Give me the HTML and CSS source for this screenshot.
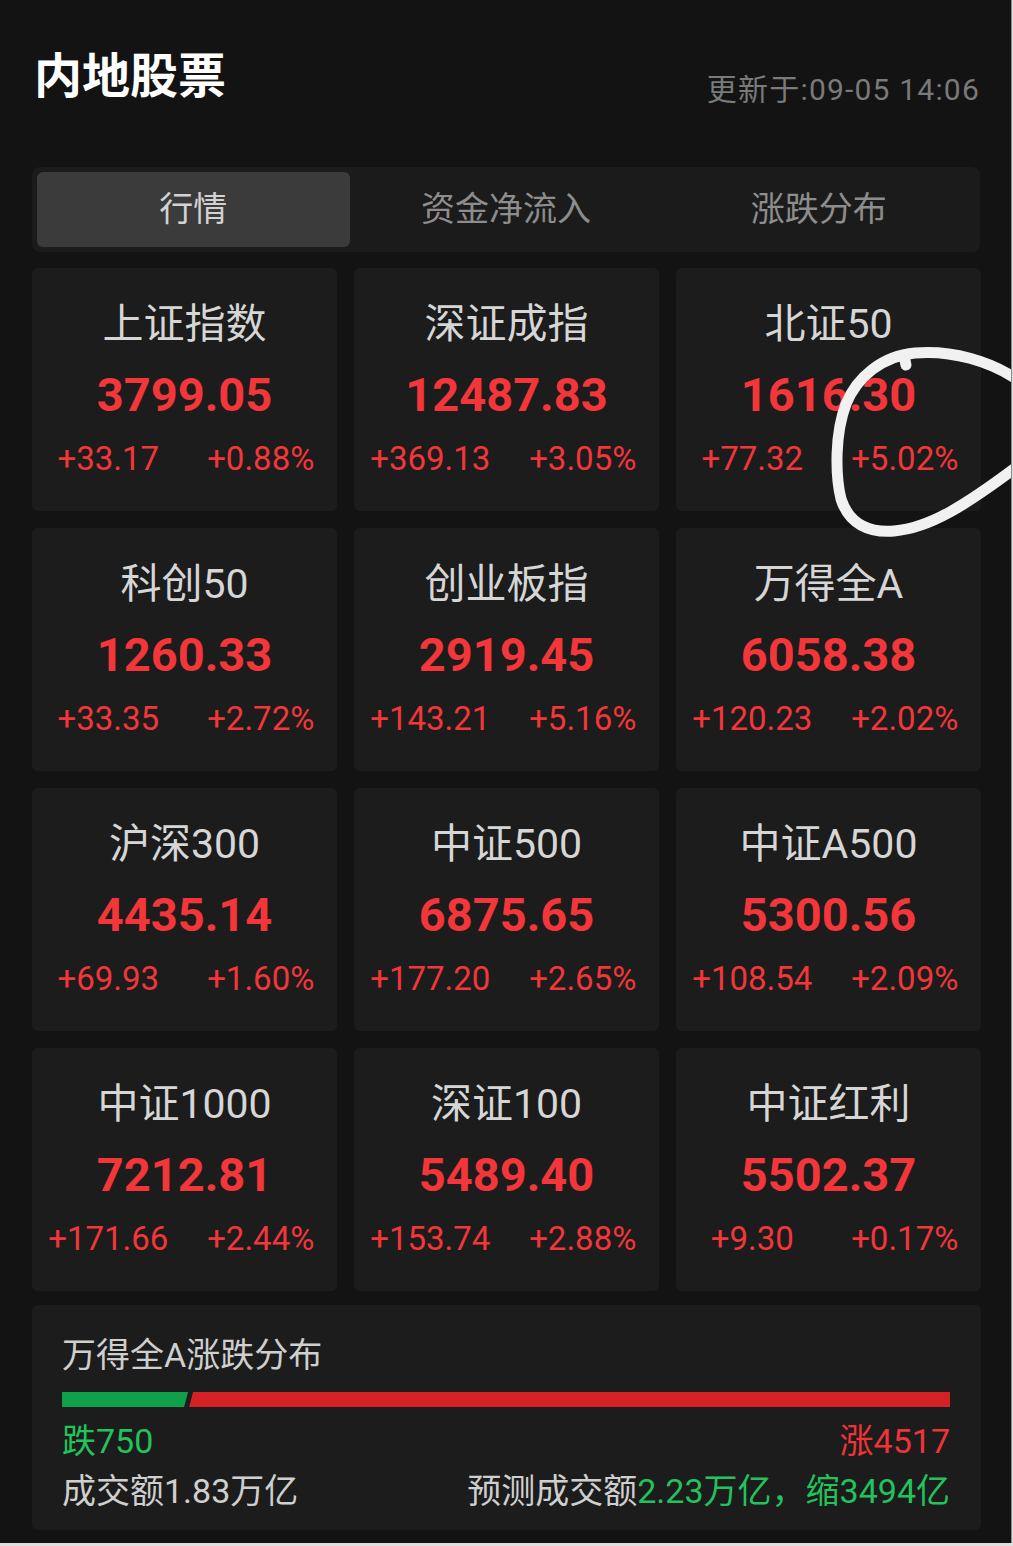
FILE: index.html
```html
<!DOCTYPE html>
<html lang="zh-CN">
<head>
<meta charset="utf-8">
<title>内地股票</title>
<link rel="stylesheet" href="styles.css">
</head>
<body>
<div class="screen">
  <header class="header">
    <h1 class="title">内地股票</h1>
    <div class="updated">更新于:09-05 14:06</div>
  </header>

  <nav class="tabs">
    <div class="tab active">行情</div>
    <div class="tab">资金净流入</div>
    <div class="tab">涨跌分布</div>
  </nav>

  <section class="grid">
    <div class="card"><div class="name">上证指数</div><div class="value">3799.05</div><div class="change"><span>+33.17</span><span>+0.88%</span></div></div>
    <div class="card"><div class="name">深证成指</div><div class="value">12487.83</div><div class="change"><span>+369.13</span><span>+3.05%</span></div></div>
    <div class="card"><div class="name">北证50</div><div class="value">1616.30</div><div class="change"><span>+77.32</span><span>+5.02%</span></div></div>

    <div class="card"><div class="name">科创50</div><div class="value">1260.33</div><div class="change"><span>+33.35</span><span>+2.72%</span></div></div>
    <div class="card"><div class="name">创业板指</div><div class="value">2919.45</div><div class="change"><span>+143.21</span><span>+5.16%</span></div></div>
    <div class="card"><div class="name">万得全A</div><div class="value">6058.38</div><div class="change"><span>+120.23</span><span>+2.02%</span></div></div>

    <div class="card"><div class="name">沪深300</div><div class="value">4435.14</div><div class="change"><span>+69.93</span><span>+1.60%</span></div></div>
    <div class="card"><div class="name">中证500</div><div class="value">6875.65</div><div class="change"><span>+177.20</span><span>+2.65%</span></div></div>
    <div class="card"><div class="name">中证A500</div><div class="value">5300.56</div><div class="change"><span>+108.54</span><span>+2.09%</span></div></div>

    <div class="card"><div class="name">中证1000</div><div class="value">7212.81</div><div class="change"><span>+171.66</span><span>+2.44%</span></div></div>
    <div class="card"><div class="name">深证100</div><div class="value">5489.40</div><div class="change"><span>+153.74</span><span>+2.88%</span></div></div>
    <div class="card"><div class="name">中证红利</div><div class="value">5502.37</div><div class="change"><span>+9.30</span><span>+0.17%</span></div></div>
  </section>

  <section class="dist">
    <div class="dist-title">万得全A涨跌分布</div>
    <div class="bar">
      <div class="bar-down" style="width: 14.2%"></div>
      <div class="bar-up"></div>
    </div>
    <div class="dist-row">
      <span class="green">跌750</span>
      <span class="red">涨4517</span>
    </div>
    <div class="dist-row">
      <span>成交额1.83万亿</span>
      <span>预测成交额<span class="green">2.23万亿，缩3494亿</span></span>
    </div>
  </section>

  <svg class="scribble" width="1013" height="1546" viewBox="0 0 1013 1546" aria-hidden="true">
    <path d="M1018 380 C 990 361, 952 350, 915 353 C 882 356, 857 377, 846 404 C 835 433, 835 474, 841 499 C 849 524, 869 533, 894 531 C 930 528, 966 505, 1018 466" />
    <path d="M904 356 L 906 365" />
  </svg>
</div>
</body>
</html>
```

FILE: styles.css
```css
html {
  background: #dedede;
}

body {
  margin: 0;
  font-family: Roboto, "Noto Sans CJK SC", "Noto Sans", sans-serif;
}

.screen {
  position: relative;
  width: 1012px;
  height: 1543px;
  box-sizing: border-box;
  border-right: 1px solid #8c8c8c;
  background: #131313;
  padding: 47px 31px 0 32px;
  overflow: hidden;
}

.header {
  display: flex;
  justify-content: space-between;
  align-items: flex-start;
  height: 60px;
}

.title {
  margin: 0;
  font-size: 48px;
  line-height: 60px;
  font-weight: 700;
  color: #ffffff;
  padding-left: 2px;
}

.updated {
  margin-top: 23px;
  font-size: 30px;
  line-height: 40px;
  color: #7a7a7a;
  letter-spacing: 1.2px;
}

.tabs {
  margin-top: 60px;
  width: 948px;
  height: 85px;
  box-sizing: border-box;
  padding: 5px;
  display: flex;
  background: #1b1b1b;
  border-radius: 8px;
}

.tab {
  flex: 1;
  display: flex;
  align-items: center;
  justify-content: center;
  padding-bottom: 6px;
  font-size: 34px;
  color: #8d8d8d;
  border-radius: 6px;
}

.tab.active {
  background: #3b3b3b;
  color: #d2d2d2;
}

.grid {
  margin-top: 16px;
  display: grid;
  grid-template-columns: repeat(3, 305px);
  column-gap: 17px;
  row-gap: 17px;
}

.card {
  background: #1c1c1c;
  border-radius: 6px;
  height: 243px;
  box-sizing: border-box;
  padding-top: 26px;
  display: flex;
  flex-direction: column;
  align-items: stretch;
}

.name {
  height: 60px;
  line-height: 60px;
  text-align: center;
  font-size: 41px;
  color: #d6d6d6;
}

.value {
  margin-top: 9px;
  height: 64px;
  line-height: 64px;
  text-align: center;
  font-size: 47px;
  font-weight: 700;
  color: #f2363a;
}

.change {
  margin-top: 7px;
  height: 50px;
  line-height: 50px;
  display: flex;
  font-size: 33px;
  color: #f2363a;
}

.change span {
  flex: 1;
  text-align: center;
}

.dist {
  margin-top: 14px;
  width: 949px;
  box-sizing: border-box;
  background: #1c1c1c;
  border-radius: 6px;
  padding: 25px 31px 17px 30px;
  color: #cfcfcf;
  font-size: 34px;
}

.dist-title {
  height: 50px;
  line-height: 50px;
}

.bar {
  margin-top: 12px;
  height: 15px;
  display: flex;
}

.bar-down {
  background: #0fa049;
  clip-path: polygon(0 0, 100% 0, calc(100% - 4px) 100%, 0 100%);
}

.bar-up {
  flex: 1;
  margin-left: 1px;
  background: #d42224;
  clip-path: polygon(4px 0, 100% 0, 100% 100%, 0 100%);
}

.dist-row {
  margin-top: 12px;
  height: 44px;
  line-height: 44px;
  display: flex;
  justify-content: space-between;
}

.dist-row + .dist-row {
  margin-top: 6px;
}

.green {
  color: #22c35d;
}

.red {
  color: #ef3437;
}

.scribble {
  position: absolute;
  left: 0;
  top: 0;
  pointer-events: none;
  fill: none;
  stroke: #f1f1f1;
  stroke-width: 11;
  stroke-linecap: round;
  stroke-linejoin: round;
}
```
